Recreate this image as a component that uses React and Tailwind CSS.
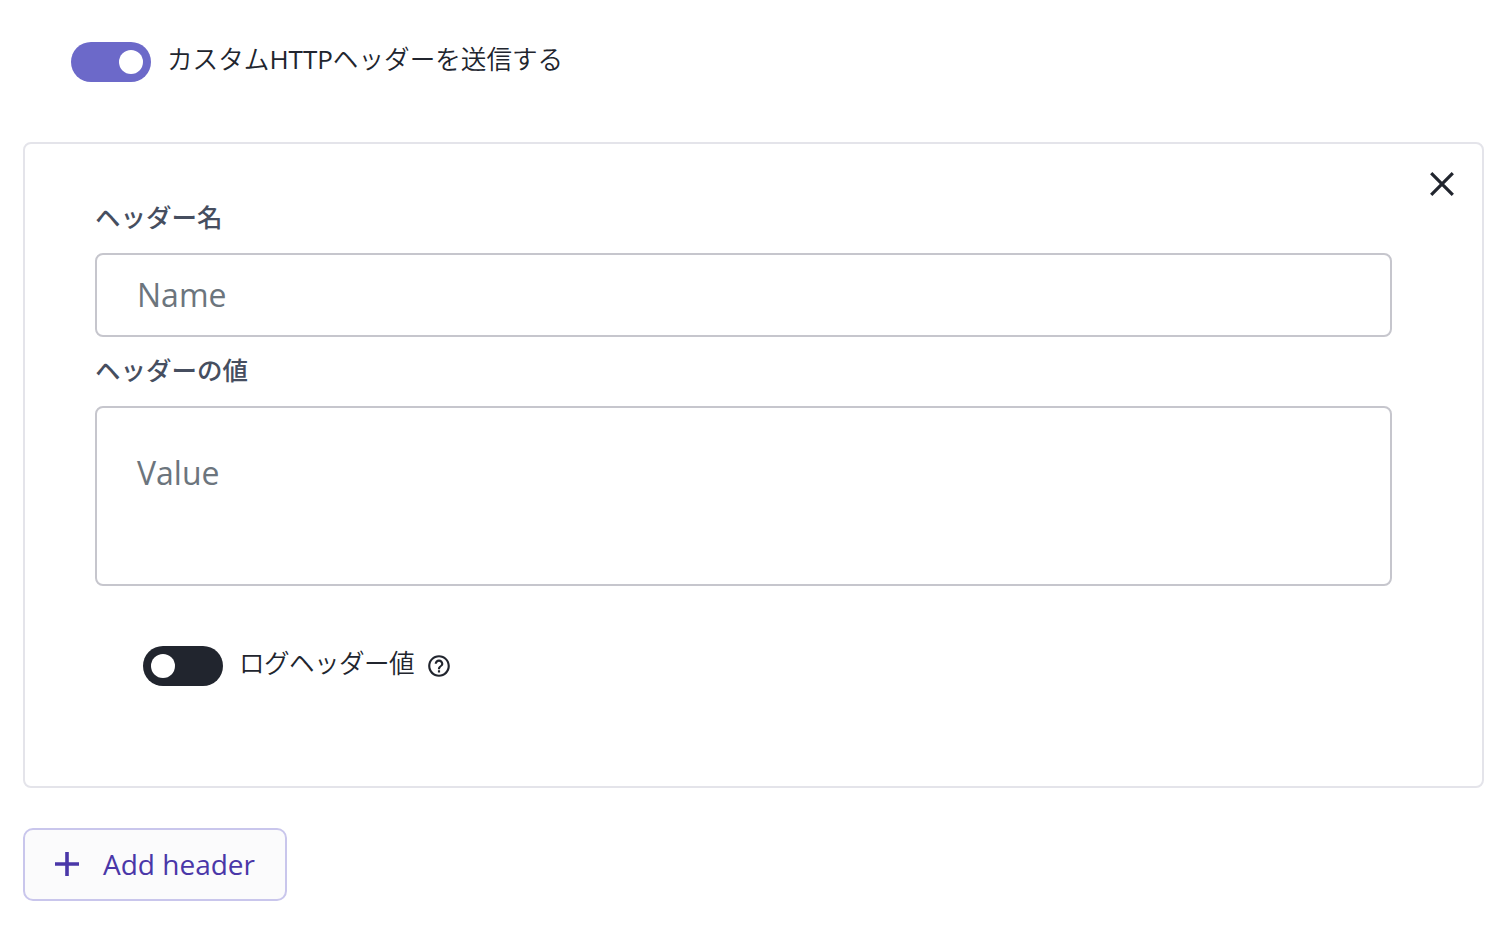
import { useState } from 'react'

function Toggle({ checked, onChange }) {
  return (
    <button
      type="button"
      role="switch"
      aria-checked={checked}
      onClick={() => onChange(!checked)}
      className={`flex h-10 w-20 shrink-0 items-center rounded-full px-2 ${
        checked ? 'justify-end bg-[#6c69c9]' : 'justify-start bg-[#21252e]'
      }`}
    >
      <span className="size-6 rounded-full bg-white" />
    </button>
  )
}

function CloseIcon() {
  return (
    <svg className="size-6" viewBox="0 0 24 24" fill="none" stroke="currentColor" strokeWidth="3.2">
      <path d="M1.2 1.2 22.8 22.8M22.8 1.2 1.2 22.8" />
    </svg>
  )
}

function PlusIcon() {
  return (
    <svg className="size-6" viewBox="0 0 24 24" fill="none" stroke="currentColor" strokeWidth="3.6">
      <path d="M12 0v24M0 12h24" />
    </svg>
  )
}

function HelpIcon() {
  return (
    <svg className="size-[26px]" viewBox="0 0 24 24" fill="currentColor">
      <path d="M11 18h2v-2h-2v2zm1-16C6.48 2 2 6.48 2 12s4.48 10 10 10 10-4.48 10-10S17.52 2 12 2zm0 18c-4.41 0-8-3.59-8-8s3.59-8 8-8 8 3.59 8 8-3.59 8-8 8zm0-14c-2.21 0-4 1.79-4 4h2c0-1.1.9-2 2-2s2 .9 2 2c0 2-3 1.75-3 5h2c0-2.25 3-2.5 3-5 0-2.21-1.79-4-4-4z" />
    </svg>
  )
}

export default function App() {
  const [enabled, setEnabled] = useState(true)
  const [logValue, setLogValue] = useState(false)

  return (
    <div className="h-[926px] w-[1506px] bg-white pl-[23px] pr-[22px] pt-[42px] font-['Open_Sans','Noto_Sans_CJK_JP',sans-serif] text-[#21252e]">
      <div className="flex h-10 pl-12">
        <Toggle checked={enabled} onChange={setEnabled} />
        <span className="ml-4 h-9 text-[25.6px] leading-[35px] font-[350] whitespace-nowrap">
          カスタム<span className="text-[26px] leading-none font-normal">HTTP</span>ヘッダーを送信する
        </span>
      </div>

      {/* Header entry */}
      <div className="mt-15 flex h-[646px] flex-col rounded-lg border-2 border-[#e4e4ea] pt-7 pr-[28px] pl-[70px]">
        <button type="button" aria-label="Close" className="self-end">
          <CloseIcon />
        </button>
        <div className="mr-[62px] flex flex-col">
          <label className="mt-[3px] h-9 text-[25.5px] leading-9 font-medium text-[#464e5f]">ヘッダー名</label>
          <input
            placeholder="Name"
            className="mt-[18px] h-[84px] rounded-lg border-2 border-[#c6c6cd] px-10 pb-px text-[32px] placeholder:text-[#6c757d]"
          />
          <label className="mt-[15px] h-9 text-[25.5px] leading-9 font-medium text-[#464e5f]">ヘッダーの値</label>
          <textarea
            placeholder="Value"
            className="mt-[18px] h-[180px] resize-none rounded-lg border-2 border-[#c6c6cd] px-10 pt-[41px] text-[32px] leading-12 placeholder:text-[#6c757d]"
          />
        </div>
        <div className="mt-15 flex h-10 pl-12">
          <Toggle checked={logValue} onChange={setLogValue} />
          <span className="ml-4 h-9 w-[176px] text-[25.6px] leading-9 font-[350] tracking-[-0.6px] whitespace-nowrap">ログヘッダー値</span>
          <span className="mt-[7px] ml-[11px]">
            <HelpIcon />
          </span>
        </div>
      </div>

      <button
        type="button"
        className="mt-10 flex h-[73px] w-[264px] items-center rounded-[10px] border-2 border-[#c9c6ec] bg-[#fbfbfc] pb-[2px] pl-[30px] text-[28px] text-[#4a37a8]"
      >
        <PlusIcon />
        <span className="ml-6">Add header</span>
      </button>
    </div>
  )
}
